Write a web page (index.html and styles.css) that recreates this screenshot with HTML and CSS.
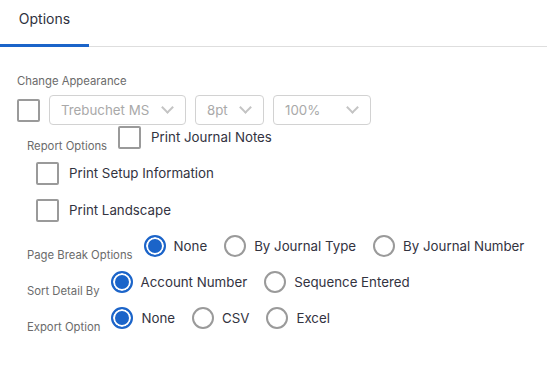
FILE: index.html
```html
<!DOCTYPE html>
<html lang="en">
<head>
    <meta charset="UTF-8">
    <title>Options</title>
    <link rel="stylesheet" href="styles.css">
</head>
<body>
    <nav class="tabs">
        <a class="tab active" href="javascript:;">Options</a>
    </nav>
    <main class="panel">
        <div class="group-label">Change Appearance</div>
        <div class="appearance">
            <span class="box"></span>
            <div class="select wide"><span>Trebuchet MS</span><i class="chev"></i></div>
            <div class="select small"><span>8pt</span><i class="chev"></i></div>
            <div class="select mid"><span>100%</span><i class="chev"></i></div>
        </div>

        <div class="row report">
            <span class="label">Report Options</span>
            <label class="check"><span class="box"></span>Print Journal Notes</label>
        </div>
        <div class="indent">
            <label class="check"><span class="box"></span>Print Setup Information</label>
            <label class="check"><span class="box"></span>Print Landscape</label>
        </div>

        <div class="row">
            <span class="label">Page Break Options</span>
            <label class="radio"><span class="dot on"></span>None</label>
            <label class="radio"><span class="dot"></span>By Journal Type</label>
            <label class="radio"><span class="dot"></span>By Journal Number</label>
        </div>
        <div class="row">
            <span class="label">Sort Detail By</span>
            <label class="radio"><span class="dot on"></span>Account Number</label>
            <label class="radio"><span class="dot"></span>Sequence Entered</label>
        </div>
        <div class="row">
            <span class="label">Export Option</span>
            <label class="radio"><span class="dot on"></span>None</label>
            <label class="radio"><span class="dot"></span>CSV</label>
            <label class="radio"><span class="dot"></span>Excel</label>
        </div>
    </main>
</body>
</html>
```

FILE: styles.css
```css
* {
    padding: 0;
    margin: 0;
    box-sizing: border-box;
}

body {
    font-family: Inter, "Open Sans", sans-serif;
    color: #33333f;
    background: #fff;
    width: 547px;
    white-space: nowrap;
}

.tabs {
    display: flex;
    height: 47px;
    border-bottom: 1px solid #dedede;
}

.tab {
    display: block;
    width: 89px;
    padding-top: 10px;
    text-align: center;
    font-size: 14px;
    color: #2e3140;
    text-decoration: none;
}

.tab.active {
    border-bottom: 3px solid #1b64c9;
    margin-bottom: -1px;
}

.panel {
    padding: 27px 0 0 17px;
}

.group-label,
.label {
    font-size: 11.3px;
    color: #6b6b6b;
    line-height: 14px;
}

.appearance {
    display: flex;
    align-items: center;
    gap: 9px;
    margin-top: 7px;
}

.box {
    display: inline-block;
    width: 23px;
    height: 23px;
    border: 2px solid #9a9a9a;
    border-radius: 2px;
    flex: none;
}

.select {
    display: flex;
    align-items: center;
    justify-content: space-between;
    height: 30px;
    padding: 0 9px 0 11px;
    border: 1px solid #d2d2d2;
    border-radius: 4px;
    font-size: 13.3px;
    color: #a9a9a9;
}

.select.wide { width: 137px; }
.select.small { width: 69px; }
.select.mid { width: 98px; }

.chev {
    width: 9px;
    height: 9px;
    border-right: 2px solid #c4c4c4;
    border-bottom: 2px solid #c4c4c4;
    transform: rotate(45deg);
    margin: -5px 4px 0 0;
}

.row {
    display: flex;
    align-items: flex-start;
    padding-left: 10px;
    height: 36px;
}

.row .label {
    margin: 13px 11px 0 0;
}

.report {
    margin-top: 1px;
}

.indent {
    padding-left: 19px;
    margin-bottom: -1px;
}

.check {
    display: flex;
    align-items: center;
    gap: 10px;
    font-size: 13.3px;
}

.row .check {
    height: 22px;
}

.indent .check {
    height: 37px;
    padding-bottom: 15px;
}

.radio {
    display: flex;
    align-items: center;
    gap: 8px;
    height: 22px;
    margin-right: 17px;
    font-size: 13.3px;
}

.dot {
    width: 22px;
    height: 22px;
    border-radius: 50%;
    border: 2px solid #9a9a9a;
    flex: none;
}

.dot.on {
    border-color: #1b64c9;
    background: #1b64c9;
    box-shadow: inset 0 0 0 2px #fff;
}
```
